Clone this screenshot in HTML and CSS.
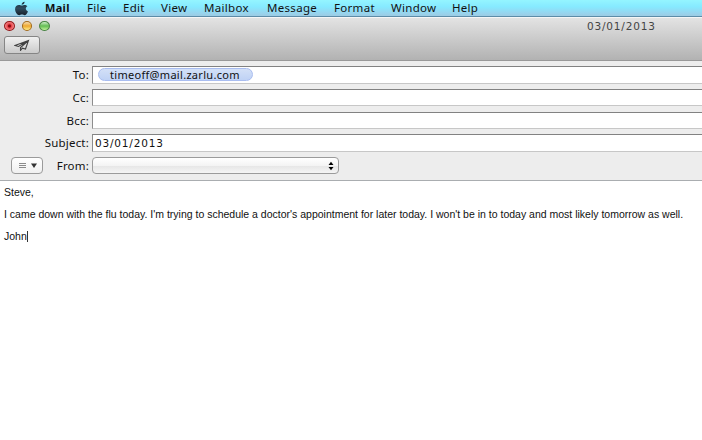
FILE: index.html
```html
<!DOCTYPE html>
<html lang="en">
<head>
<meta charset="utf-8">
<title>Mail</title>
<link rel="stylesheet" href="styles.css">
</head>
<body>
<nav class="menubar">
  <svg class="apple" viewBox="0 0 14 14"><defs><linearGradient id="ag" x2="0" y2="1"><stop stop-color="#16303c"/><stop offset=".5" stop-color="#2f4b5c"/><stop offset="1" stop-color="#17212c"/></linearGradient></defs><path fill="url(#ag)" d="M9.900.6C10 2.100 8.600 3.500 7.100 3.500 7 2.100 8.400.8 9.900.6zM12.500 5C10.300 6.200 10.700 8.800 13 9.700 12.500 11.200 11.200 13.200 9.900 13.200 8.900 13.200 8.600 12.700 7.400 12.700 6.200 12.700 5.900 13.200 4.900 13.200 3.100 13.200.9 10 1 7.400 1 5 2.700 3.700 4.600 3.700 5.700 3.700 6.400 4.300 7.300 4.300 8.200 4.300 9 3.700 10.200 3.700 11.100 3.700 12 4.200 12.500 5z"/></svg>
  <span class="item mail">Mail</span>
  <span class="item file">File</span>
  <span class="item edit">Edit</span>
  <span class="item view">View</span>
  <span class="item mailbox">Mailbox</span>
  <span class="item message">Message</span>
  <span class="item format">Format</span>
  <span class="item window">Window</span>
  <span class="item help">Help</span>
</nav>
<header class="titlebar">
  <div class="title-row">
    <div class="lights"><i class="light red"></i><i class="light amber"></i><i class="light green"></i></div>
    <span class="title">03/01/2013</span>
  </div>
  <button class="send" aria-label="Send"><svg viewBox="0 0 16 12"><path d="M14.500 1.500 1 6.500 4.500 7.500 14.500 1.500 6.500 8.500v2.900L8.400 9.200l3.100.8z"/></svg></button>
</header>
<section class="headers">
  <div class="row"><label class="label">To:</label><div class="field"><span class="token">timeoff@mail.zarlu.com</span></div></div>
  <div class="row"><label class="label">Cc:</label><div class="field"></div></div>
  <div class="row"><label class="label">Bcc:</label><div class="field"></div></div>
  <div class="row"><label class="label">Subject:</label><div class="field"><span class="subject">03/01/2013</span></div></div>
  <div class="row from-row">
    <button class="options" aria-label="Options"><svg viewBox="0 0 32 17"><path d="M8 6.500h7M8 8.500h7M8 10.500h7" stroke="#8b8b8b"/><path d="M20 6.500h6l-3 4.500z" fill="#333"/></svg></button>
    <label class="label">From:</label>
    <div class="select"><svg viewBox="0 0 6 10"><path d="M.5 4h5L3 .8zM.5 6h5L3 9.200z"/></svg></div>
  </div>
</section>
<main class="body">
  <p>Steve,</p>
  <p>I came down with the flu today. I'm trying to schedule a doctor's appointment for later today. I won't be in to today and most likely tomorrow as well.</p>
  <p>John<span class="caret"></span></p>
</main>
</body>
</html>
```
FILE: styles.css
```css
* { box-sizing: border-box; }
body {
  margin: 0; width: 702px; height: 440px; overflow: hidden;
  background: #fff; color: #111;
  font: 11.500px/16px "Noto Sans", sans-serif;
}
.menubar {
  display: flex; height: 17px; padding-left: 14px;
  background: linear-gradient(#94f5ff 0, #86eaff 40%, #96d5ef 75%, #9dcbe3 94%, #5c8ca8 94%);
}
.apple { width: 15px; height: 15px; margin: 1px 16px 0 0; flex: none; }
.item { flex: none; line-height: 16px; white-space: nowrap; letter-spacing: .3px; }
.mail { width: 42px; font-size: 11px; font-weight: 700; }
.file { width: 36px; }
.edit { width: 38px; }
.view { width: 43px; }
.mailbox { width: 63px; }
.message { width: 67px; }
.format { width: 57px; }
.window { width: 61px; }
.titlebar {
  height: 44px; border-top: 1px solid #f6f6f6; border-bottom: 1px solid #999;
  background: linear-gradient(#e3e3e3, #cdcdcd 45%, #b2b2b2);
}
.title-row { display: flex; height: 18px; }
.lights { display: flex; gap: 7px; padding: 3px 0 0 4px; width: 587px; }
.light { width: 10.500px; height: 10px; border-radius: 50%; border: 1px solid; }
.red { background: radial-gradient(circle at 50% 50%, #870b12 0 1px, #e94147 2px, #f9a0a0 5px); border-color: #941b1c; }
.amber { background: linear-gradient(#f8dcae, #eda82f 50%, #ffee8a); border-color: #a26a1b; }
.green { background: linear-gradient(#cdeec8, #62bd52 50%, #c1f49b); border-color: #4a8544; }
.title { color: #444; font: 10.500px/16px "DejaVu Sans", sans-serif; letter-spacing: .82px; }
.send {
  display: block; width: 36px; height: 18px; margin: 0 0 0 4px; padding: 0 0 0 9px;
  border: 1px solid #858585; border-radius: 3px;
  background: linear-gradient(#f0f0f0, #cbcbcb);
}
.send svg { display: block; width: 16px; height: 12px; fill: none; stroke: #424242; stroke-width: 1.100; }
.headers { height: 120px; padding-top: 5px; background: #ededed; border-bottom: 1px solid #aaadb0; }
.row { display: flex; height: 22.750px; }
.label { width: 92px; padding-right: 3px; text-align: right; line-height: 17px; letter-spacing: .2px; }
.field {
  flex: 1; height: 17.500px; background: #fff;
  border: 1px solid #c7c7c7; border-top-color: #828282; border-left-color: #8d8d8d; border-right: 0;
}
.token {
  display: block; width: 155px; height: 13px; margin: 1px 0 0 5px; padding-left: 11px;
  border: 1px solid #a9bdf0; border-radius: 7px; background: linear-gradient(#d3e0f7, #bfd2f5);
  font-size: 11px; line-height: 11px; letter-spacing: .3px;
}
.subject { display: block; padding-left: 2px; font: 10.500px/17px "DejaVu Sans", sans-serif; letter-spacing: .82px; }
.options {
  width: 32px; height: 17px; margin: 0 0 0 11px; padding: 0;
  border: 1px solid #9b9b9b; border-radius: 4px; background: linear-gradient(#fff, #f0f0f0);
}
.options svg { display: block; width: 32px; height: 17px; margin: -1px; }
.from-row .label { width: 49px; }
.select {
  width: 247px; height: 17px; padding: 3px 0 0 235px; border: 1px solid #9b9b9b; border-radius: 4px;
  background: linear-gradient(#fff, #f4f4f4 50%, #e7e7e7 55%, #f5f5f5);
}
.select svg { display: block; width: 6px; height: 10px; }
.body { padding: 6px 4px; font: 10.500px/11px "Liberation Sans", sans-serif; }
.body p { margin: 0 0 11px; white-space: nowrap; }
.caret { display: inline-block; width: 1px; height: 11px; background: #333; vertical-align: -2px; }
```
